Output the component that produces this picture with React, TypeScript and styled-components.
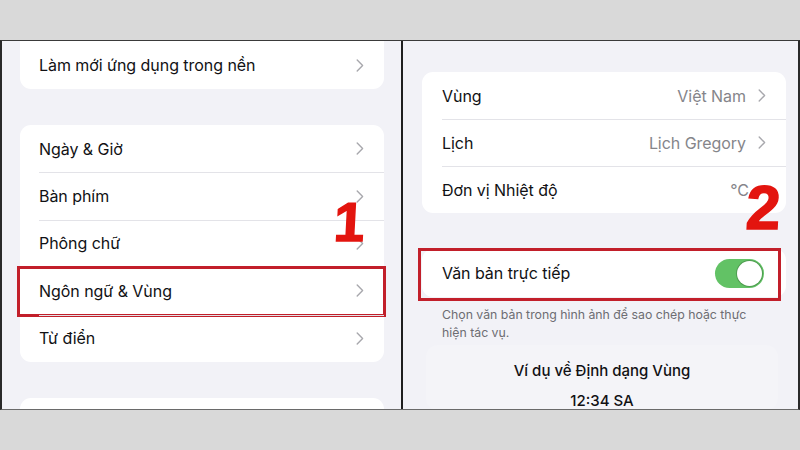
import styled, { createGlobalStyle } from "styled-components";

const GlobalStyle = createGlobalStyle`
  html, body {
    margin: 0;
    padding: 0;
    background: #d9d9d9;
    font-family: Inter, "Noto Sans", "DejaVu Sans", sans-serif;
    color: #111114;
  }
`;

const Page = styled.div`
  width: 800px;
  height: 450px;
  padding-top: 40px;
  box-sizing: border-box;
  overflow: hidden;
`;

const Frame = styled.div`
  display: flex;
  height: 370px;
  border-top: 1px solid #3a3a3a;
  border-bottom: 1px solid #6a6a6a;
  border-left: 2px solid #2a2a2a;
  border-right: 2px solid #2a2a2a;
  box-sizing: border-box;
`;

const Divider = styled.div`
  width: 2px;
  background: #1f1f1f;
`;

const Panel = styled.div<{ $pl: number; $pr: number; $pt: number }>`
  position: relative;
  flex: 1;
  background: #f2f2f7;
  overflow: hidden;
  padding: ${(p) => p.$pt}px ${(p) => p.$pr}px 0 ${(p) => p.$pl}px;
  display: flex;
  flex-direction: column;
`;

const Card = styled.div<{ $mt?: number }>`
  background: #ffffff;
  border-radius: 11px;
  margin-top: ${(p) => p.$mt ?? 0}px;
  flex-shrink: 0;
`;

type Box = [number, number, number, number];

const Row = styled.div<{ $h: number; $pl: number; $sep?: boolean; $box?: Box }>`
  position: relative;
  height: ${(p) => p.$h}px;
  display: flex;
  align-items: center;
  padding: 0 20px 0 ${(p) => p.$pl}px;
  font-size: 16px;
  letter-spacing: -0.05px;

  &::before {
    content: "";
    display: ${(p) => (p.$sep ? "block" : "none")};
    position: absolute;
    top: 0;
    left: ${(p) => p.$pl}px;
    right: 0;
    height: 1px;
    background: #e3e3e8;
  }

  &::after {
    content: "";
    display: ${(p) => (p.$box ? "block" : "none")};
    position: absolute;
    top: ${(p) => p.$box?.[0] ?? 0}px;
    right: ${(p) => p.$box?.[1] ?? 0}px;
    bottom: ${(p) => p.$box?.[2] ?? 0}px;
    left: ${(p) => p.$box?.[3] ?? 0}px;
    border: 3px solid #c21f2a;
  }
`;

const Label = styled.span`
  flex: 1;
  white-space: nowrap;
`;

const Value = styled.span<{ $mr: number }>`
  color: #85858a;
  margin-right: ${(p) => p.$mr}px;
`;

const Toggle = styled.div`
  width: 49px;
  height: 29px;
  border-radius: 15px;
  background: #62c265;
  position: relative;
  margin-right: 2px;

  &::after {
    content: "";
    position: absolute;
    right: 2px;
    top: 2px;
    width: 25px;
    height: 25px;
    border-radius: 50%;
    background: #fff;
    box-shadow: 0 0 0 1px rgba(60, 120, 60, 0.5);
  }
`;

const Footnote = styled.p`
  margin: 9px 0 0 20px;
  font-size: 12.3px;
  line-height: 18px;
  color: #6d6d72;
`;

const Example = styled.div`
  margin: 3px 8px 0 4px;
  background: #f4f4f8;
  border-radius: 12px;
  padding-top: 16px;
  display: flex;
  flex-direction: column;
  align-items: center;
  gap: 11px;
  font-size: 15px;
  font-weight: 500;
  line-height: 19px;
  height: 120px;
`;

const Step = styled.span<{ $x: number; $y: number; $size: number }>`
  position: absolute;
  left: ${(p) => p.$x}px;
  top: ${(p) => p.$y}px;
  font-family: "Liberation Sans", Arial, sans-serif;
  font-weight: 700;
  font-size: ${(p) => p.$size}px;
  line-height: 1;
  color: #e3150f;
  transform: skewX(-3deg);
  -webkit-text-stroke: 1.5px #e3150f;
`;

const Chevron = () => (
  <svg width="8" height="13" viewBox="0 0 8 13">
    <path d="M1.2 1 L6.6 6.5 L1.2 12" fill="none" stroke="#a8a8ad" strokeWidth="1.4" strokeLinecap="round" strokeLinejoin="round" />
  </svg>
);

const leftRows = ["Ngày & Giờ", "Bàn phím", "Phông chữ", "Ngôn ngữ & Vùng", "Từ điển"];
const rightRows: [string, string, boolean][] = [
  ["Vùng", "Việt Nam", true],
  ["Lịch", "Lịch Gregory", true],
  ["Đơn vị Nhiệt độ", "°C", false],
];

export default function App() {
  return (
    <Page>
      <GlobalStyle />
      <Frame>
        <Panel $pl={18} $pr={17} $pt={0}>
          <Card $mt={-10}>
            <Row $h={58} $pl={19} style={{ paddingTop: 10, boxSizing: "border-box" }}>
              <Label>Làm mới ứng dụng trong nền</Label>
              <Chevron />
            </Row>
          </Card>
          <Card $mt={36}>
            {leftRows.map((t, i) => (
              <Row key={t} $h={47.4} $pl={19} $sep={i > 0} $box={i === 3 ? [-1, -2, -2, -3] : undefined}>
                <Label>{t}</Label>
                <Chevron />
              </Row>
            ))}
          </Card>
          <Card $mt={36} style={{ height: 40 }} />
          <Step $x={332} $y={154} $size={55}>1</Step>
        </Panel>
        <Divider />
        <Panel $pl={19} $pr={12} $pt={31}>
          <Card>
            {rightRows.map(([t, v, chev], i) => (
              <Row key={t} $h={47} $pl={20} $sep={i > 0}>
                <Label>{t}</Label>
                <Value $mr={chev ? 12 : 17}>{v}</Value>
                {chev && <Chevron />}
              </Row>
            ))}
          </Card>
          <Card $mt={36}>
            <Row $h={48} $pl={20} $box={[-1, 5, -4, -4]}>
              <Label>Văn bản trực tiếp</Label>
              <Toggle />
            </Row>
          </Card>
          <Footnote>
            Chọn văn bản trong hình ảnh để sao chép hoặc thực
            <br />
            hiện tác vụ.
          </Footnote>
          <Example>
            <span>Ví dụ về Định dạng Vùng</span>
            <span>12:34 SA</span>
          </Example>
          <Step $x={343} $y={136} $size={62}>2</Step>
        </Panel>
      </Frame>
    </Page>
  );
}
